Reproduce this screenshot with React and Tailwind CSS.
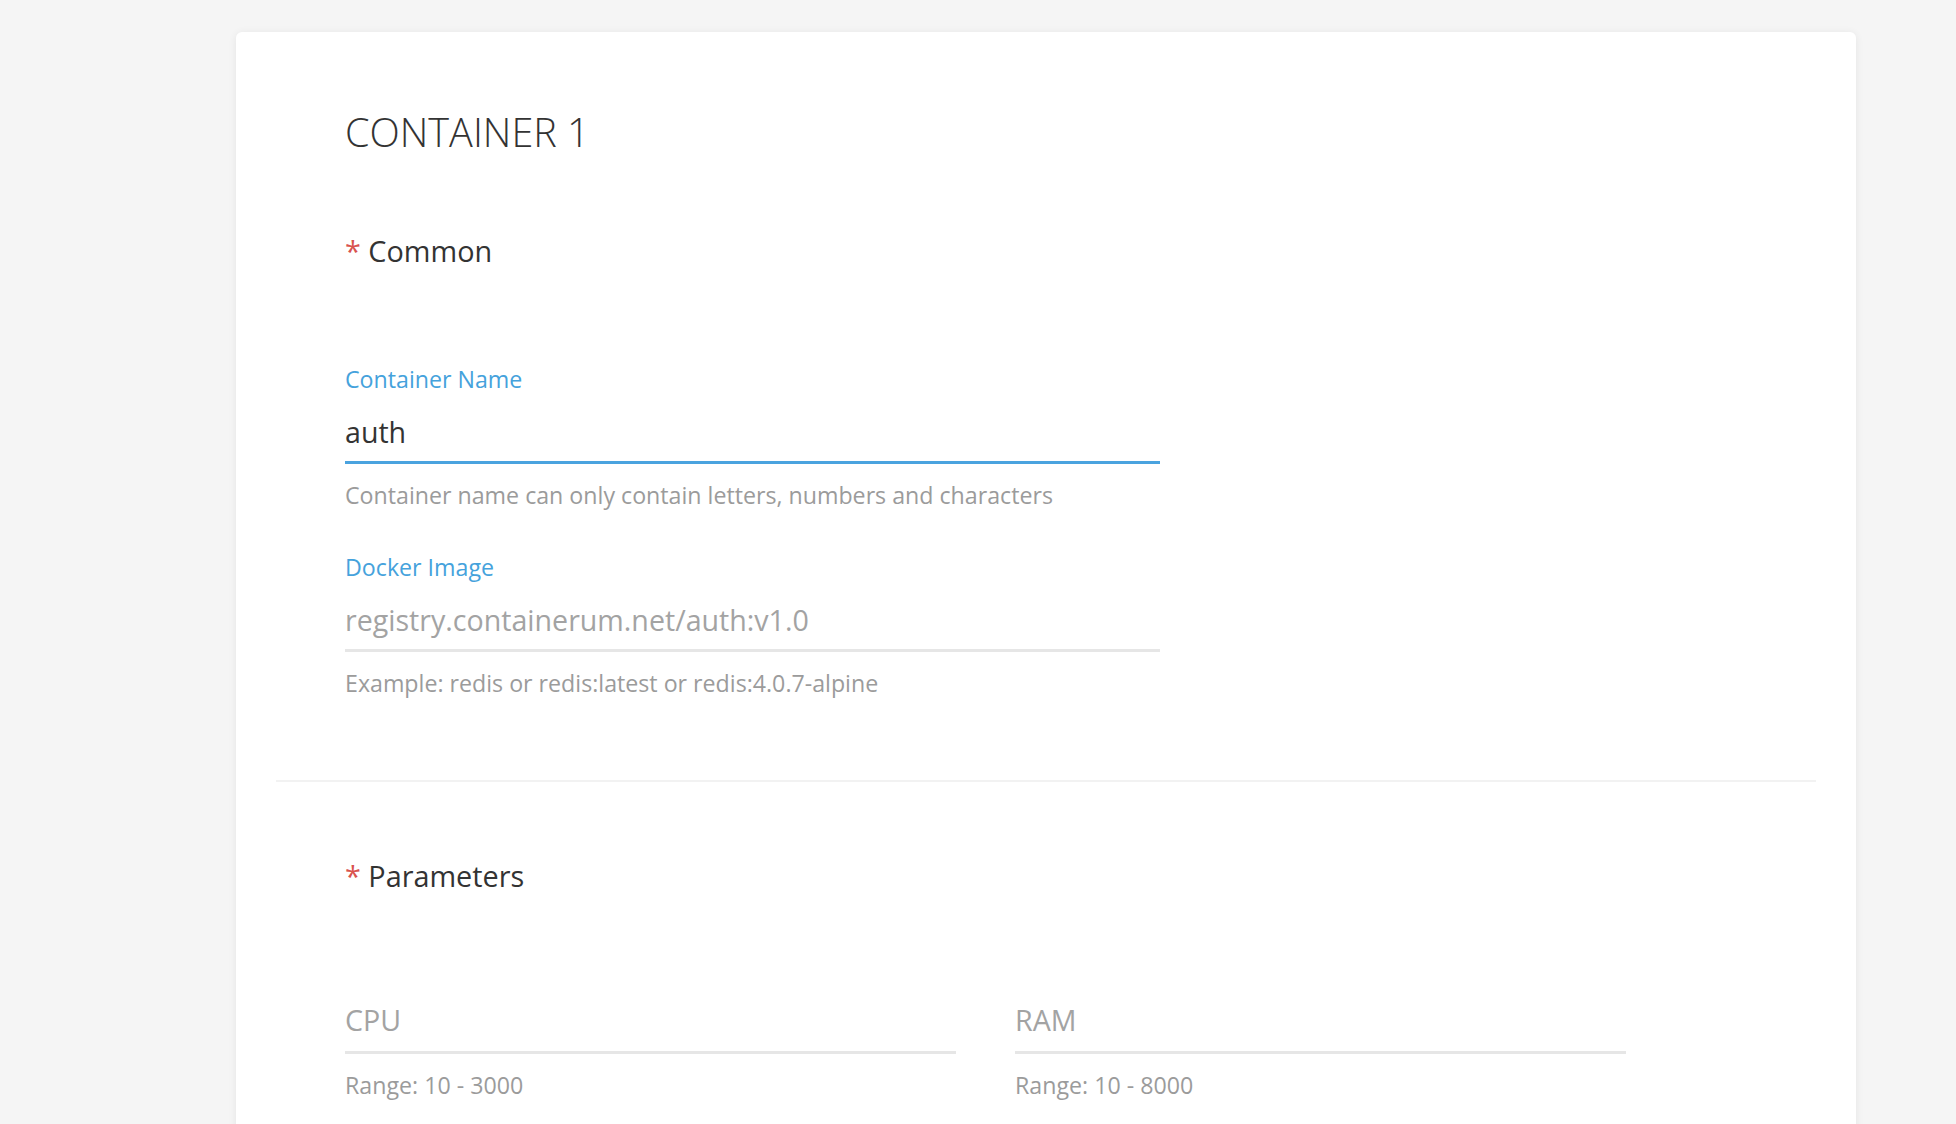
import React, { useState } from 'react';

const font = { fontFamily: '"Open Sans", "Noto Sans", sans-serif' };

// Section heading with the red required mark
const SectionTitle = ({ children, className }) => (
    <h3 className={`text-[28.8px] leading-[40px] text-[#333] ${className}`}>
        <span className="text-[#d9534f]">*</span> {children}
    </h3>
);

const Field = ({ label, value, placeholder, hint, active, onChange, className, tall }) => (
    <div className={className}>
        {label ? (
            <label className="block text-[23.2px] leading-[30px] text-[#45a2dc] mb-[19px]">{label}</label>
        ) : null}
        <input
            type="text"
            value={value}
            onChange={onChange}
            placeholder={placeholder}
            className={`block w-full ${tall ? 'h-[53px] pb-[13px]' : 'h-[51px] pb-[11px]'} text-[28.6px] leading-[40px] text-[#333] placeholder:text-[#a3a3a3] bg-transparent outline-none border-b-[3px] ${active ? 'border-[#4aa3df]' : 'border-[#e6e6e6]'}`}
        />
        <p className="mt-[16px] text-[23.2px] leading-[30px] text-[#9b9b9b]">{hint}</p>
    </div>
);

const App = () => {
    const [form, setForm] = useState({ name: 'auth', image: '', cpu: '', ram: '' });

    const handleChange = (key) => (e) => {
        const { value } = e.target;
        setForm(prev => ({ ...prev, [key]: value }));
    };

    return (
        <div className="min-h-screen bg-[#f5f5f5] pt-[32px] pl-[236px] pr-[100px] overflow-hidden" style={font}>
            <div className="bg-white rounded-[6px] shadow-[0_1px_8px_rgba(0,0,0,0.07)] px-[40px] pt-[76px] pb-[120px]">
                {/* Common */}
                <div className="pl-[69px]">
                    <h2 className="text-[39.6px] leading-[48px] font-light text-[#333]">CONTAINER 1</h2>
                    <SectionTitle className="mt-[75px]">Common</SectionTitle>
                    <div className="w-[815px]">
                        <Field
                            className="mt-[93px]"
                            label="Container Name"
                            value={form.name}
                            onChange={handleChange('name')}
                            hint="Container name can only contain letters, numbers and characters"
                            active
                        />
                        <Field
                            className="mt-[42px]"
                            label="Docker Image"
                            value={form.image}
                            onChange={handleChange('image')}
                            placeholder="registry.containerum.net/auth:v1.0"
                            hint="Example: redis or redis:latest or redis:4.0.7-alpine"
                        />
                    </div>
                </div>

                <div className="mt-[82px] h-[2px] bg-[#f2f2f2]" />

                {/* Parameters */}
                <div className="pl-[69px]">
                    <SectionTitle className="mt-[74px]">Parameters</SectionTitle>
                    <div className="mt-[105px] flex gap-[59px]">
                        <Field
                            className="w-[611px]"
                            value={form.cpu}
                            onChange={handleChange('cpu')}
                            placeholder="CPU"
                            hint="Range: 10 - 3000"
                            tall
                        />
                        <Field
                            className="w-[611px]"
                            value={form.ram}
                            onChange={handleChange('ram')}
                            placeholder="RAM"
                            hint="Range: 10 - 8000"
                            tall
                        />
                    </div>
                </div>
            </div>
        </div>
    );
};

export default App;
